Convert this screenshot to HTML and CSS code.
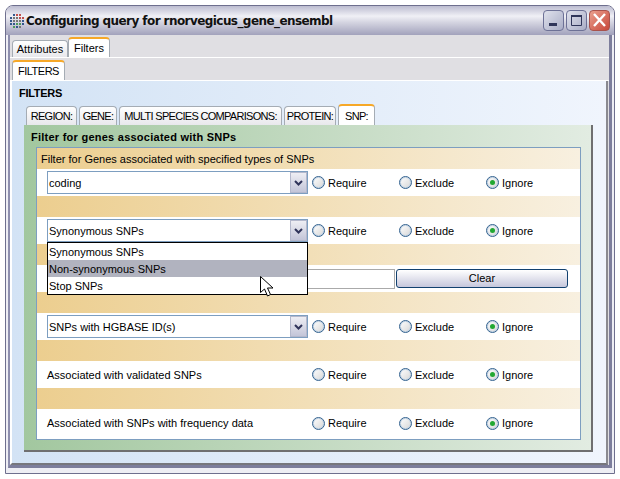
FILE: index.html
```html
<!DOCTYPE html>
<html lang="en">
<head>
    <meta charset="UTF-8">
    <title>Configuring query for rnorvegicus_gene_ensembl</title>
    <link rel="stylesheet" href="styles.css">
</head>
<body>
    <div class="window">
        <div class="titlebar">
            <svg class="app-icon" width="16" height="16" viewBox="0 0 16 16">
                <g fill="#33578c">
                    <rect x="4" y="1" width="2" height="2"/><rect x="1" y="4" width="2" height="2"/><rect x="1" y="7" width="2" height="2"/><rect x="1" y="10" width="2" height="2"/>
                    <rect x="4" y="10" width="2" height="2"/><rect x="7" y="13" width="2" height="2"/><rect x="13" y="7" width="2" height="2"/><rect x="13" y="10" width="2" height="2"/>
                </g>
                <g fill="#c0504d"><rect x="7" y="1" width="2" height="2"/><rect x="10" y="4" width="2" height="2"/><rect x="10" y="1" width="2" height="2"/><rect x="13" y="4" width="2" height="2"/></g>
                <g fill="#4d9a5a"><rect x="4" y="13" width="2" height="2"/><rect x="7" y="10" width="2" height="2"/><rect x="10" y="10" width="2" height="2"/></g>
                <g fill="#777"><rect x="4" y="4" width="2" height="2"/><rect x="7" y="4" width="2" height="2"/><rect x="4" y="7" width="2" height="2"/><rect x="7" y="7" width="2" height="2"/><rect x="10" y="7" width="2" height="2"/><rect x="10" y="13" width="2" height="2"/></g>
            </svg>
            <span class="title">Configuring query for rnorvegicus_gene_ensembl</span>
            <div class="win-buttons">
                <div class="win-btn"><svg width="21" height="20" viewBox="0 0 21 20"><rect x="6" y="13" width="8" height="3" fill="#30365a"/></svg></div>
                <div class="win-btn"><svg width="21" height="20" viewBox="0 0 21 20"><path d="M5.500 5.500h10v10h-10z" fill="none" stroke="#30365a"/><rect x="5" y="5" width="11" height="2" fill="#30365a"/></svg></div>
                <div class="win-btn win-close"><svg width="21" height="20" viewBox="0 0 21 20"><path d="M5 4l11 12M16 4L5 16" stroke="#fff" stroke-width="2.400" fill="none"/></svg></div>
            </div>
        </div>
        <div class="content">
            <div class="tabstrip top-strip">
                <div class="tab top-tab">Attributes</div>
                <div class="tab active filters-tab">Filters</div>
            </div>
            <div class="tabstrip second-strip">
                <div class="tab active filters-sub">FILTERS</div>
            </div>
            <div class="blue-panel">
                <div class="panel-label">FILTERS</div>
                <div class="section-tabs">
                    <div class="tab sec-tab region">REGION:</div>
                    <div class="tab sec-tab gene">GENE:</div>
                    <div class="tab sec-tab multi">MULTI SPECIES COMPARISONS:</div>
                    <div class="tab sec-tab protein">PROTEIN:</div>
                    <div class="tab active snp">SNP:</div>
                </div>
                <div class="green-panel">
                    <div class="green-title">Filter for genes associated with SNPs</div>
                    <div class="filter-list">
                        <div class="band">Filter for Genes associated with specified types of SNPs</div>
                        <div class="row">
                            <div class="field">
                                <div class="combo"><span>coding</span><div class="combo-btn"><svg width="9" height="6" viewBox="0 0 9 6"><path d="M1 1l3.500 3.500L8 1" fill="none" stroke="#30345a" stroke-width="2"/></svg></div></div>
                            </div>
                            <div class="radio-label"><i class="radio"></i>Require</div>
                            <div class="radio-label"><i class="radio"></i>Exclude</div>
                            <div class="radio-label"><i class="radio on"></i>Ignore</div>
                        </div>
                        <div class="band"></div>
                        <div class="row">
                            <div class="field">
                                <div class="combo"><span>Synonymous SNPs</span><div class="combo-btn"><svg width="9" height="6" viewBox="0 0 9 6"><path d="M1 1l3.500 3.500L8 1" fill="none" stroke="#30345a" stroke-width="2"/></svg></div>
                                    <div class="popup">
                                        <div class="popup-item">Synonymous SNPs</div>
                                        <div class="popup-item selected">Non-synonymous SNPs</div>
                                        <div class="popup-item">Stop SNPs</div>
                                        <svg class="cursor" width="14" height="22" viewBox="0 0 14 22"><path d="M.5.5v16l4-3.500 3 7 3-1.500-3-6.500h5.500z" fill="#fff" stroke="#000"/></svg>
                                    </div>
                                </div>
                            </div>
                            <div class="radio-label"><i class="radio"></i>Require</div>
                            <div class="radio-label"><i class="radio"></i>Exclude</div>
                            <div class="radio-label"><i class="radio on"></i>Ignore</div>
                        </div>
                        <div class="band"></div>
                        <div class="row">
                            <div class="text-field"></div>
                            <div class="clear-btn">Clear</div>
                        </div>
                        <div class="band"></div>
                        <div class="row">
                            <div class="field">
                                <div class="combo"><span>SNPs with HGBASE ID(s)</span><div class="combo-btn"><svg width="9" height="6" viewBox="0 0 9 6"><path d="M1 1l3.500 3.500L8 1" fill="none" stroke="#30345a" stroke-width="2"/></svg></div></div>
                            </div>
                            <div class="radio-label"><i class="radio"></i>Require</div>
                            <div class="radio-label"><i class="radio"></i>Exclude</div>
                            <div class="radio-label"><i class="radio on"></i>Ignore</div>
                        </div>
                        <div class="band"></div>
                        <div class="row">
                            <div class="field">Associated with validated SNPs</div>
                            <div class="radio-label"><i class="radio"></i>Require</div>
                            <div class="radio-label"><i class="radio"></i>Exclude</div>
                            <div class="radio-label"><i class="radio on"></i>Ignore</div>
                        </div>
                        <div class="band"></div>
                        <div class="row last">
                            <div class="field">Associated with SNPs with frequency data</div>
                            <div class="radio-label"><i class="radio"></i>Require</div>
                            <div class="radio-label"><i class="radio"></i>Exclude</div>
                            <div class="radio-label"><i class="radio on"></i>Ignore</div>
                        </div>
                    </div>
                </div>
            </div>
        </div>
    </div>
</body>
</html>
```

FILE: styles.css
```css
body {
    margin: 0;
    background: #fff;
    font-family: "Liberation Sans", Arial, sans-serif;
    font-size: 11px;
    color: #000;
    overflow: hidden;
}
.window {
    box-sizing: border-box;
    width: 610px;
    height: 469px;
    margin: 5px 0 0 5px;
    border: 1px solid #6e6f8e;
    border-radius: 8px 8px 0 0;
    background: #eeeef4;
    display: flex;
    flex-direction: column;
}
.titlebar {
    height: 29px;
    flex: none;
    box-sizing: border-box;
    display: flex;
    align-items: center;
    padding-left: 3px;
    border-radius: 7px 7px 0 0;
    background: linear-gradient(#bcbcd0, #f0f0f6 35%, #d6d6e2 55%, #a2a2bc);
}
.app-icon {
    flex: none;
}
.title {
    font-family: "DejaVu Sans", Verdana, sans-serif;
    font-weight: bold;
    font-size: 12px;
    letter-spacing: -0.57px;
    color: #111;
    margin-left: 1px;
}
.win-buttons {
    margin-left: auto;
    margin-right: 4px;
    display: flex;
    gap: 2px;
}
.win-btn {
    box-sizing: border-box;
    width: 21px;
    height: 21px;
    border: 1px solid #6d7196;
    border-radius: 4px;
    background: linear-gradient(135deg, #dfe1ec, #a9adc6);
    overflow: hidden;
}
.win-btn svg {
    display: block;
    margin: -1px 0 0 -1px;
}
.win-close {
    border-color: #a8524c;
    background: linear-gradient(135deg, #eaa08e, #c8473a);
}
.content {
    flex: 1;
    min-height: 0;
    display: flex;
    flex-direction: column;
    margin: 0 2px 5px 2px;
    background: #e0dfe3;
    border-left: 2px solid #8e8fae;
    border-right: 3px solid #7d7e9c;
    border-bottom: 3px solid #7d7e9c;
}
.tabstrip {
    display: flex;
    align-items: flex-end;
    flex: none;
    height: 22px;
    border-bottom: 1px solid #fff;
    padding-left: 2px;
}
.tab {
    box-sizing: border-box;
    display: flex;
    align-items: center;
    justify-content: center;
    border: 1px solid #a5acb4;
    border-bottom: none;
    border-radius: 4px 4px 0 0;
    background: linear-gradient(#fff, #e8e8ec);
    height: 17px;
    white-space: nowrap;
}
.tab.active {
    background: #fff;
    border-top: 2px solid #f6a828;
}
.top-tab {
    width: 56px;
}
.filters-tab {
    width: 42px;
    height: 20px;
}
.filters-sub {
    width: 53px;
    height: 20px;
    letter-spacing: -0.5px;
}
.blue-panel {
    flex: 1;
    min-height: 0;
    margin-right: 1px;
    padding: 0 12px 0 12px;
    background: linear-gradient(90deg, #d3e3f5, #f0f5fd);
    border-left: 2px solid #fff;
    border-right: 2px solid #8a8a90;
    border-bottom: 2px solid #77777d;
    display: flex;
    flex-direction: column;
}
.panel-label {
    font-weight: bold;
    height: 23px;
    line-height: 24px;
    margin-left: -5px;
    letter-spacing: -0.3px;
}
.section-tabs {
    display: flex;
    align-items: flex-end;
    height: 21px;
    gap: 2px;
    margin-left: 2px;
    letter-spacing: -0.7px;
}
.sec-tab {
    height: 19px;
}
.region { width: 51px; }
.gene { width: 38px; }
.multi { width: 163px; }
.protein { width: 52px; }
.snp { width: 37px; height: 21px; }
.green-panel {
    box-sizing: border-box;
    flex: none;
    height: 327px;
    width: 569px;
    padding: 0 12px;
    background: linear-gradient(90deg, #a2c79f, #e2ece2);
    border-right: 2px solid #6f6f70;
    border-bottom: 2px solid #6f6f70;
}
.green-title {
    font-weight: bold;
    height: 22px;
    line-height: 24px;
    margin-left: -5px;
    letter-spacing: 0.25px;
}
.filter-list {
    box-sizing: border-box;
    border: 1px solid #7d9ec0;
    width: 545px;
    height: 293px;
    background: #fff;
}
.band {
    height: 21px;
    line-height: 23px;
    padding-left: 4px;
    background: linear-gradient(90deg, #ecce8f, #f8f0e0);
}
.row {
    height: 27px;
    display: flex;
    align-items: center;
    padding-left: 10px;
}
.row.last {
    height: 28px;
    padding-bottom: 2px;
}
.field {
    width: 265px;
    flex: none;
}
.combo {
    box-sizing: border-box;
    position: relative;
    width: 261px;
    height: 23px;
    border: 1px solid #7d9ec0;
    background: #fff;
    display: flex;
    align-items: center;
    padding-left: 1px;
}
.combo-btn {
    box-sizing: border-box;
    margin-left: auto;
    width: 17px;
    height: 21px;
    border: 1px solid #b4b8cc;
    background: linear-gradient(#eeeef4, #c3c5d8);
    display: flex;
    align-items: center;
    justify-content: center;
}
.popup {
    box-sizing: border-box;
    position: absolute;
    top: 22px;
    left: -1px;
    width: 261px;
    height: 53px;
    border: 1px solid #000;
    background: #fff;
    z-index: 2;
}
.popup-item {
    height: 17px;
    line-height: 19px;
    padding-left: 1px;
}
.popup-item.selected {
    background: #b1b3bf;
}
.cursor {
    position: absolute;
    top: 33px;
    left: 212px;
}
.radio-label {
    width: 87px;
    flex: none;
    display: flex;
    align-items: center;
    gap: 3px;
}
.radio {
    box-sizing: border-box;
    width: 13px;
    height: 13px;
    border: 1px solid #33628f;
    border-radius: 50%;
    background: linear-gradient(135deg, #fff, #d6d6d6);
    box-shadow: inset 0 0 0 1px #c4d4e4;
    display: flex;
    align-items: center;
    justify-content: center;
}
.radio.on::after {
    content: "";
    width: 5px;
    height: 5px;
    border-radius: 50%;
    background: #22a832;
}
.text-field {
    box-sizing: border-box;
    width: 348px;
    height: 20px;
    border: 1px solid #aaa;
    background: #fff;
}
.clear-btn {
    box-sizing: border-box;
    width: 172px;
    height: 19px;
    margin-left: 1px;
    border: 1px solid #12416f;
    border-radius: 3px;
    background: linear-gradient(#fff, #c6c7dc);
    text-align: center;
    line-height: 17px;
}
```
